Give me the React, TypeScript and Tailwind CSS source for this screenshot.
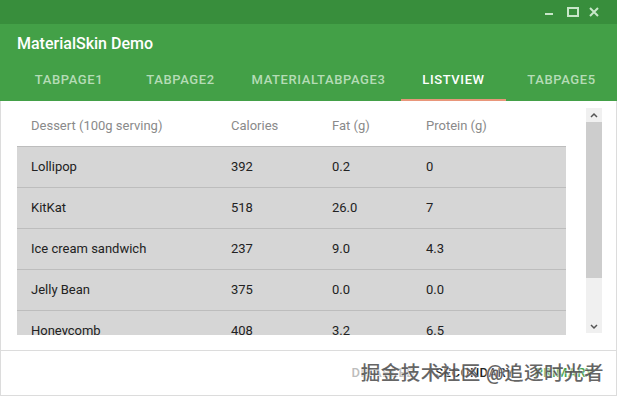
const tabs = [
  { label: 'TABPAGE1', w: 'w-[112px]' },
  { label: 'TABPAGE2', w: 'w-[111px]' },
  { label: 'MATERIALTABPAGE3', w: 'w-[165px]' },
  { label: 'LISTVIEW', w: 'w-[105px]', active: true },
  { label: 'TABPAGE5', w: 'w-[111px]' },
];

const rows = [
  ['Lollipop', '392', '0.2', '0'],
  ['KitKat', '518', '26.0', '7'],
  ['Ice cream sandwich', '237', '9.0', '4.3'],
  ['Jelly Bean', '375', '0.0', '0.0'],
  ['Honeycomb', '408', '3.2', '6.5'],
  ['Gingerbread', '356', '16.0', '4.9'],
];

const cols = ['w-[214px] pl-[14px]', 'w-[101px]', 'w-[94px]', 'flex-1'];

const App = () => {
  return (
    <div className="w-[617px] h-[396px] flex flex-col bg-white overflow-hidden" style={{ fontFamily: 'Roboto, "Noto Sans CJK SC", sans-serif' }}>
      {/* title bar */}
      <div className="h-[24px] bg-[#388E3C] flex items-start justify-end shrink-0">
        <svg width="70" height="24" viewBox="0 0 70 24" className="mr-[10px]">
          <rect x="8" y="13" width="8" height="2" fill="#c8e6c9" />
          <rect x="31" y="8" width="10" height="8" fill="none" stroke="#c8e6c9" strokeWidth="2" />
          <path d="M53 8 L61 16 M61 8 L53 16" stroke="#c8e6c9" strokeWidth="2" />
        </svg>
      </div>
      {/* app bar */}
      <div className="bg-[#43A047] shrink-0">
        <div className="h-[40px] flex items-center pl-[17px] text-white text-[16px] font-medium">MaterialSkin Demo</div>
        <div className="h-[37px] flex pl-[13px]">
          {tabs.map((t) => (
            <div key={t.label} className={`${t.w} relative flex items-center justify-center pb-[5px] text-[13px] font-medium tracking-[0.6px] ${t.active ? 'text-white' : 'text-[#b5dcb6]'}`}>
              {t.label}
              {t.active && <div className="absolute left-0 right-0 bottom-0 h-[2px] bg-[#E9967A]" />}
            </div>
          ))}
        </div>
      </div>
      {/* content */}
      <div className="flex-1 flex flex-col border-l border-r border-b border-[#dcdcdc]">
        <div className="h-[250px] flex border-b border-[#dcdcdc] shrink-0">
          <div className="w-[549px] ml-[16px] h-[234px] overflow-hidden text-[13px]">
            <div className="h-[45px] flex items-center pt-[4px] text-[#8a8a8a]">
              {['Dessert (100g serving)', 'Calories', 'Fat (g)', 'Protein (g)'].map((h, i) => (
                <div key={h} className={cols[i]}>{h}</div>
              ))}
            </div>
            {rows.map((r) => (
              <div key={r[0]} className="h-[41px] flex items-center bg-[#d6d6d6] border-t border-[#bdbdbd] text-[#222]">
                {r.map((c, i) => (
                  <div key={i} className={cols[i]}>{c}</div>
                ))}
              </div>
            ))}
          </div>
          <div className="ml-[20px] mt-[7px] w-[16px] h-[225px] flex flex-col bg-[#f0f0f0]">
            <div className="h-[14px] flex items-center justify-center">
              <svg width="8" height="6" viewBox="0 0 8 6"><path d="M1 5 L4 2 L7 5" stroke="#555" strokeWidth="1.5" fill="none" /></svg>
            </div>
            <div className="h-[156px] bg-[#cdcdcd]" />
            <div className="flex-1" />
            <div className="h-[12px] flex items-center justify-center">
              <svg width="8" height="6" viewBox="0 0 8 6"><path d="M1 1 L4 4 L7 1" stroke="#555" strokeWidth="1.5" fill="none" /></svg>
            </div>
          </div>
        </div>
        {/* bottom buttons */}
        <div className="flex-1 relative flex items-center justify-end pr-[22px] gap-[20px] text-[13px] font-medium tracking-[0.5px]">
          <span className="text-[#bdbdbd]">DISABLED</span>
          <span className="text-[#222]">SECONDARY</span>
          <span className="text-[#43A047]">PRIMARY</span>
          <div className="absolute right-[12px] top-[8px] text-[19.5px] text-[#555] opacity-90" style={{ textShadow: '0 0 2px #fff, 0 0 2px #fff' }}>
            掘金技术社区 @追逐时光者
          </div>
        </div>
      </div>
    </div>
  );
};

export default App;
